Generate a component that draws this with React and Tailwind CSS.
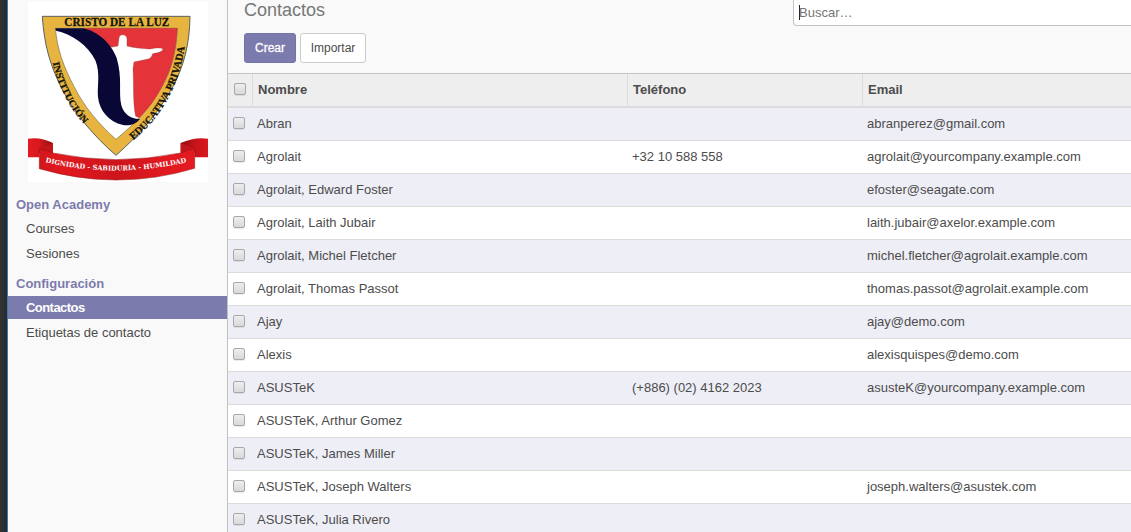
const contacts = [
  { name: "Abran", phone: "", email: "abranperez@gmail.com" },
  { name: "Agrolait", phone: "+32 10 588 558", email: "agrolait@yourcompany.example.com" },
  { name: "Agrolait, Edward Foster", phone: "", email: "efoster@seagate.com" },
  { name: "Agrolait, Laith Jubair", phone: "", email: "laith.jubair@axelor.example.com" },
  { name: "Agrolait, Michel Fletcher", phone: "", email: "michel.fletcher@agrolait.example.com" },
  { name: "Agrolait, Thomas Passot", phone: "", email: "thomas.passot@agrolait.example.com" },
  { name: "Ajay", phone: "", email: "ajay@demo.com" },
  { name: "Alexis", phone: "", email: "alexisquispes@demo.com" },
  { name: "ASUSTeK", phone: "(+886) (02) 4162 2023", email: "asusteK@yourcompany.example.com" },
  { name: "ASUSTeK, Arthur Gomez", phone: "", email: "" },
  { name: "ASUSTeK, James Miller", phone: "", email: "" },
  { name: "ASUSTeK, Joseph Walters", phone: "", email: "joseph.walters@asustek.com" },
  { name: "ASUSTeK, Julia Rivero", phone: "", email: "" },
];

function Crest() {
  return (
    <svg viewBox="0 0 540 540" className="block h-[180px] w-[180px] bg-white" role="img">
      <defs>
        <linearGradient id="ribbonTab" x1="0" x2="1">
          <stop offset="0" stopColor="#e31b22" />
          <stop offset="0.45" stopColor="#d8181e" />
          <stop offset="1" stopColor="#8c0d10" />
        </linearGradient>
        <linearGradient id="ribbonTabEnd" x1="1" x2="0">
          <stop offset="0" stopColor="#d8181e" />
          <stop offset="0.45" stopColor="#c8141a" />
          <stop offset="1" stopColor="#8c0d10" />
        </linearGradient>
        <linearGradient id="ribbon" x1="0" x2="1">
          <stop offset="0" stopColor="#d2161c" />
          <stop offset="0.15" stopColor="#e0191f" />
          <stop offset="0.5" stopColor="#cc151b" />
          <stop offset="0.85" stopColor="#e31a20" />
          <stop offset="1" stopColor="#e21b21" />
        </linearGradient>
        <path id="leftArc" d="M74 182C90 248 122 316 170 369" />
        <path id="rightArc" d="M316 415C400 345 456 250 471 125" />
        <path id="ribbonArc" d="M52 481Q266 531 482 479" />
      </defs>
      <path
        d="M43 43H486C485 125 468 195 430 262C390 333 335 398 264 460C195 400 146 340 108 272C66 195 48 125 43 43Z"
        fill="#e7b53f"
        stroke="#59605f"
        strokeWidth="3"
      />
      <path
        d="M82 79H448C444 150 430 205 400 257C368 315 320 366 264 412C208 362 170 315 140 257C104 190 88 140 82 79Z"
        fill="#fff"
        stroke="#77704f"
        strokeWidth="2"
      />
      <path
        d="M165 79H448C444 150 430 205 400 257C381 292 360 321 334 347L323 343C314 300 318 250 315 200L318 180L357 172C368 170 371 164 374 155C386 153 398 151 404 145C406 138 398 138 388 138C374 138 376 141 362 141C340 139 318 138 297 132V110C296 96 275 94 273 108L270 132L248 136Z"
        fill="#e4343a"
        stroke="#8a3335"
        strokeWidth="1"
      />
      <path
        d="M82 79H165C210 88 250 125 266 168C284 230 271 270 280 310C288 338 310 352 336 351C322 369 302 372 285 369C242 360 214 325 210 285C207 250 218 215 202 175C180 128 130 96 84 86Z"
        fill="#080735"
      />
      <g fill="#17130a" stroke="#17130a" strokeWidth="0.8" fontFamily="'Liberation Serif', serif" fontWeight="bold">
        <text x="109" y="73" fontSize="36" textLength="315" lengthAdjust="spacingAndGlyphs">
          CRISTO DE LA LUZ
        </text>
        <text fontSize="29" textLength="208" lengthAdjust="spacingAndGlyphs">
          <textPath href="#leftArc" textLength="208" lengthAdjust="spacingAndGlyphs">INSTITUCIÓN</textPath>
        </text>
        <text fontSize="32" textLength="328" lengthAdjust="spacingAndGlyphs">
          <textPath href="#rightArc" textLength="328" lengthAdjust="spacingAndGlyphs">EDUCATIVA PRIVADA</textPath>
        </text>
      </g>
      <path d="M0 410Q38 404 75 423V452H34V466H0Z" fill="url(#ribbonTab)" />
      <path d="M540 410Q500 404 458 423V452H500V466H540Z" fill="url(#ribbonTabEnd)" />
      <path d="M75 423L34 440V452H75Z" fill="#c4151b" />
      <path d="M458 423L500 440V452H458Z" fill="#c4151b" />
      <path
        d="M34 440Q50 443 75 453Q170 472 264 473Q362 472 458 453Q482 443 500 440V499Q385 534 264 534Q150 534 34 500Z"
        fill="url(#ribbon)"
        stroke="#8e1013"
        strokeWidth="1.5"
      />
      <text fill="#fff" fontFamily="'DejaVu Serif', serif" fontWeight="bold" fontSize="20" textLength="428" lengthAdjust="spacingAndGlyphs">
        <textPath href="#ribbonArc" textLength="428" lengthAdjust="spacingAndGlyphs">DIGNIDAD - SABIDURÍA - HUMILDAD</textPath>
      </text>
    </svg>
  );
}

function Checkbox() {
  return (
    <input
      type="checkbox"
      className="block h-3 w-3 shrink-0 appearance-none rounded-[2px] border border-[#a8a8a8] bg-linear-to-b from-[#eeeeee] to-[#d9d9d9] shadow-[0_1px_0_rgba(0,0,0,0.08)]"
    />
  );
}

function NavItem({ label, active }) {
  return (
    <a
      className={
        active
          ? "block h-[23px] bg-[#7c7bad] pl-[18px] leading-[23px] font-bold tracking-[-0.55px] text-white"
          : "block h-[23px] pl-[18px] leading-[23px]"
      }
    >
      {label}
    </a>
  );
}

export default function App() {
  return (
    <div className="flex h-[532px] w-[1131px] overflow-hidden bg-white font-['Liberation_Sans',Arial,sans-serif] text-[13px] text-[#4c4c4c]">
      <div className="w-[7px] shrink-0 bg-linear-to-r from-[#333333] to-[#2a2a2a]" />
      <aside className="w-[221px] shrink-0 border-r border-l border-r-[#c0c0c0] border-l-[#2f7fc0] bg-[#f9f9f9]">
        <div className="flex justify-center pt-[2px] pr-px pl-[2px]">
          <Crest />
        </div>
        <nav>
          <h2 className="mt-[12px] h-[22px] pl-2 leading-[22px] font-bold text-[#7c7bad]">Open Academy</h2>
          <div className="mt-[1px] flex flex-col gap-[2px]">
            <NavItem label="Courses" />
            <NavItem label="Sesiones" />
          </div>
          <h2 className="mt-[8px] h-[22px] pl-2 leading-[22px] font-bold text-[#7c7bad]">Configuración</h2>
          <div className="mt-[1px] flex flex-col gap-[2px]">
            <NavItem label="Contactos" active />
            <NavItem label="Etiquetas de contacto" />
          </div>
        </nav>
      </aside>
      <main className="flex min-w-0 flex-1 flex-col">
        <header className="flex h-[74px] shrink-0 justify-between border-b border-[#c4c4c4] bg-[#f9f9f9] pl-4">
          <div>
            <h1 className="h-[33px] text-[18px] leading-[20px] text-[#777777]">Contactos</h1>
            <div className="flex gap-1 text-[12px]">
              <button className="h-[30px] w-[52px] rounded-[3px] border border-[#7574a8] bg-[#7c7bad] text-white [-webkit-text-stroke:0.3px_white]">Crear</button>
              <button className="h-[30px] w-[66px] rounded-[3px] border border-[#cccccc] bg-white">Importar</button>
            </div>
          </div>
          <div className="-mt-1 flex h-[30px] w-[338px] items-center rounded-bl-[4px] border-b border-l border-[#c4c4c4] bg-white pl-[5px] text-[#757575]">
            <span className="mt-[3px] h-[15px] w-px bg-[#222222]" />
            <span className="mt-[4px] -ml-px">Buscar…</span>
          </div>
        </header>
        <div className="grid h-[34px] shrink-0 grid-cols-[25px_375px_235px_1fr] border-b-2 border-[#dcdcdc] bg-[#eeeeee] leading-[31px] font-bold">
          <div className="flex items-center border-r border-[#dcdcdc] pb-[2px] pl-[6px]">
            <Checkbox />
          </div>
          <div className="border-r border-[#dcdcdc] pl-[5px]">Nombre</div>
          <div className="border-r border-[#dcdcdc] pl-[5px]">Teléfono</div>
          <div className="pl-[5px]">Email</div>
        </div>
        {contacts.map((c) => (
          <div
            key={c.name}
            className="grid h-[33px] shrink-0 grid-cols-[25px_375px_235px_1fr] border-b border-[#dcdcdc] leading-[31px] odd:bg-[#eeeef6] even:bg-white"
          >
            <div className="flex items-center pb-[2px] pl-[5px]">
              <Checkbox />
            </div>
            <div className="pl-[4px]">{c.name}</div>
            <div className="pl-[4px]">{c.phone}</div>
            <div className="pl-[4px]">{c.email}</div>
          </div>
        ))}
      </main>
    </div>
  );
}
